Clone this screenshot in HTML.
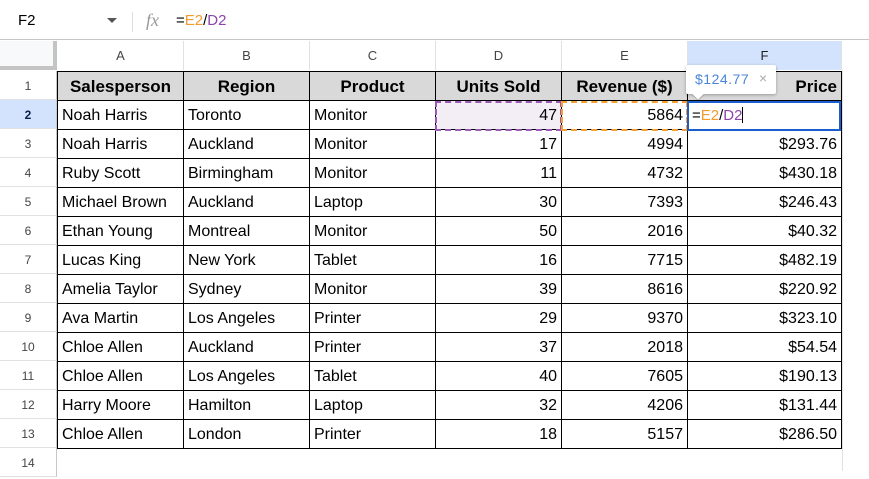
<!DOCTYPE html>
<html><head><style>
*{margin:0;padding:0;box-sizing:border-box}
body{width:869px;height:471px;overflow:hidden;background:#fff;font-family:"Liberation Sans",Arial,sans-serif;position:relative}
.a{position:absolute}
.ch{position:absolute;top:41px;height:29px;line-height:29px;text-align:center;font-size:13px;color:#444;border-right:1px solid #e1e1e1}
.rh{position:absolute;left:0;width:57px;height:29px;line-height:31px;text-align:center;font-size:12px;color:#444;border-bottom:1px solid #e1e1e1;border-right:1px solid #c7c7c7}
table{position:absolute;left:57px;top:71px;border-collapse:collapse;table-layout:fixed}
td{border:1px solid #000;height:29px;padding:2px 4px 0 4px;font-size:16px;color:#000;white-space:nowrap;overflow:hidden}
tr.h td{background:#d9d9d9;font-weight:bold;font-size:17px;text-align:center}
td.n{text-align:right}
</style></head><body>
<div class="a" style="left:0;top:0;width:869px;height:40px;border-bottom:1px solid #c7c7c7"></div>
<div class="a" style="left:18px;top:12px;font-size:15px;color:#000">F2</div>
<div class="a" style="left:107px;top:18px;width:0;height:0;border-left:5px solid transparent;border-right:5px solid transparent;border-top:5px solid #555"></div>
<div class="a" style="left:132px;top:12px;width:1px;height:20px;background:#ddd"></div>
<div class="a" style="left:146px;top:10px;font-family:'Liberation Serif',serif;font-style:italic;font-size:18px;color:#999">fx</div>
<div class="a" style="left:176px;top:12px;font-size:15px;color:#000">=<span style="color:#f29b2e">E2</span>/<span style="color:#8e44ad">D2</span></div>
<div class="a" style="left:0;top:41px;width:53px;height:25px;background:#f8f9fa"></div>
<div class="a" style="left:53px;top:41px;width:4px;height:29px;background:#c4c4c4"></div>
<div class="a" style="left:0;top:66px;width:57px;height:4px;background:#c4c4c4"></div>
<div class="ch" style="left:58px;width:126px">A</div>
<div class="ch" style="left:184px;width:126px">B</div>
<div class="ch" style="left:310px;width:126px">C</div>
<div class="ch" style="left:436px;width:126px">D</div>
<div class="ch" style="left:562px;width:126px">E</div>
<div class="ch" style="left:688px;width:154px;background:#d3e3fd;color:#1f1f1f">F</div>
<div class="ch" style="left:842px;width:40px"></div>
<div class="rh" style="top:71px">1</div>
<div class="rh" style="top:100px;background:#d3e3fd;color:#0b1f4a;font-weight:bold">2</div>
<div class="rh" style="top:129px">3</div>
<div class="rh" style="top:158px">4</div>
<div class="rh" style="top:187px">5</div>
<div class="rh" style="top:216px">6</div>
<div class="rh" style="top:245px">7</div>
<div class="rh" style="top:274px">8</div>
<div class="rh" style="top:303px">9</div>
<div class="rh" style="top:332px">10</div>
<div class="rh" style="top:361px">11</div>
<div class="rh" style="top:390px">12</div>
<div class="rh" style="top:419px">13</div>
<div class="rh" style="top:448px">14</div>
<div class="a" style="left:842px;top:70px;width:1px;height:401px;background:#e1e1e1"></div>
<table>
<colgroup><col style="width:126px"><col style="width:126px"><col style="width:126px"><col style="width:126px"><col style="width:126px"><col style="width:154px"></colgroup>
<tr class="h"><td>Salesperson</td><td>Region</td><td>Product</td><td>Units Sold</td><td>Revenue ($)</td><td style="text-align:right">Price</td></tr>
<tr><td>Noah Harris</td><td>Toronto</td><td>Monitor</td><td class="n" style="background:#f3eef6">47</td><td class="n">5864</td><td></td></tr>
<tr><td>Noah Harris</td><td>Auckland</td><td>Monitor</td><td class="n">17</td><td class="n">4994</td><td class="n">$293.76</td></tr>
<tr><td>Ruby Scott</td><td>Birmingham</td><td>Monitor</td><td class="n">11</td><td class="n">4732</td><td class="n">$430.18</td></tr>
<tr><td>Michael Brown</td><td>Auckland</td><td>Laptop</td><td class="n">30</td><td class="n">7393</td><td class="n">$246.43</td></tr>
<tr><td>Ethan Young</td><td>Montreal</td><td>Monitor</td><td class="n">50</td><td class="n">2016</td><td class="n">$40.32</td></tr>
<tr><td>Lucas King</td><td>New York</td><td>Tablet</td><td class="n">16</td><td class="n">7715</td><td class="n">$482.19</td></tr>
<tr><td>Amelia Taylor</td><td>Sydney</td><td>Monitor</td><td class="n">39</td><td class="n">8616</td><td class="n">$220.92</td></tr>
<tr><td>Ava Martin</td><td>Los Angeles</td><td>Printer</td><td class="n">29</td><td class="n">9370</td><td class="n">$323.10</td></tr>
<tr><td>Chloe Allen</td><td>Auckland</td><td>Printer</td><td class="n">37</td><td class="n">2018</td><td class="n">$54.54</td></tr>
<tr><td>Chloe Allen</td><td>Los Angeles</td><td>Tablet</td><td class="n">40</td><td class="n">7605</td><td class="n">$190.13</td></tr>
<tr><td>Harry Moore</td><td>Hamilton</td><td>Laptop</td><td class="n">32</td><td class="n">4206</td><td class="n">$131.44</td></tr>
<tr><td>Chloe Allen</td><td>London</td><td>Printer</td><td class="n">18</td><td class="n">5157</td><td class="n">$286.50</td></tr>
</table>
<div class="a" style="left:435px;top:101px;width:127px;height:30px;border:2px dashed #9b59b6"></div>
<div class="a" style="left:561px;top:101px;width:127px;height:30px;border:2px dashed #f4a030"></div>
<div class="a" style="left:687px;top:101px;width:154px;height:30px;border:2px solid #1a5fd0;background:#fff"></div>
<div class="a" style="left:692px;top:107px;font-size:15px;color:#000">=<span style="color:#f29b2e">E2</span>/<span style="color:#8e44ad">D2</span><span style="display:inline-block;width:1px;height:16px;background:#000;vertical-align:-3px"></span></div>
<div class="a" style="left:686px;top:65px;width:90px;height:29px;background:#fff;box-shadow:0 1px 3px rgba(0,0,0,.3);border-radius:2px"></div>
<div class="a" style="left:694px;top:90px;width:8px;height:8px;background:#fff;transform:rotate(45deg);box-shadow:1px 1px 1px rgba(0,0,0,.2)"></div>
<div class="a" style="left:686px;top:65px;width:90px;height:27px;background:#fff;border-radius:2px"></div>
<div class="a" style="left:695px;top:71px;font-family:'Liberation Sans',sans-serif;font-size:14px;letter-spacing:0.5px;color:#4a86d8">$124.77</div>
<div class="a" style="left:759px;top:70px;font-size:14px;color:#aaa">×</div>
</body></html>
